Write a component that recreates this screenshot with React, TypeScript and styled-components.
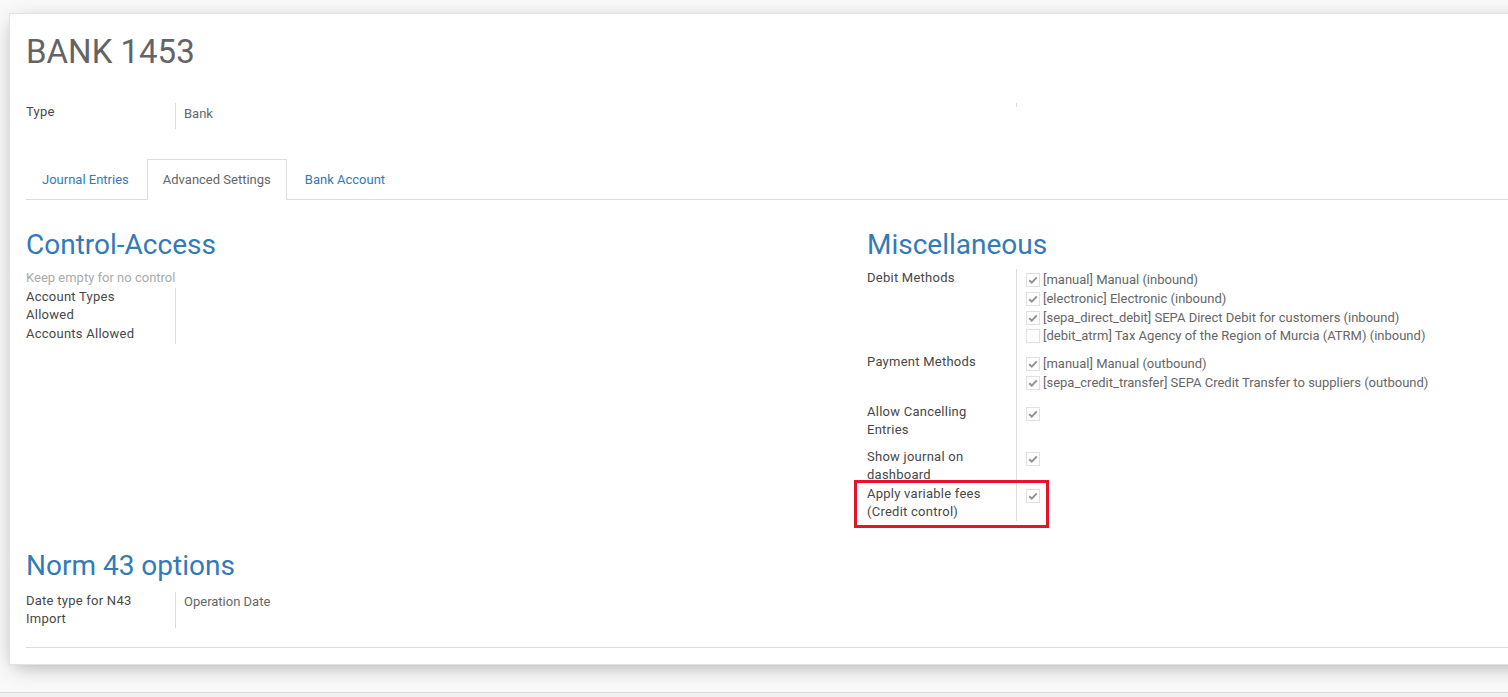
import styled, { createGlobalStyle } from 'styled-components';

const GlobalStyle = createGlobalStyle`
  html, body {
    margin: 0;
    padding: 0;
    overflow: hidden;
    background: #f9f9f9;
  }
  body {
    font-family: Roboto, "Liberation Sans", Arial, sans-serif;
    font-size: 13px;
    line-height: 18px;
    color: #4c4c4c;
  }
`;

interface MethodItem {
  code: string;
  label: string;
  checked: boolean;
}

const debitMethods: MethodItem[] = [
  { code: 'manual', label: 'Manual (inbound)', checked: true },
  { code: 'electronic', label: 'Electronic (inbound)', checked: true },
  { code: 'sepa_direct_debit', label: 'SEPA Direct Debit for customers (inbound)', checked: true },
  { code: 'debit_atrm', label: 'Tax Agency of the Region of Murcia (ATRM) (inbound)', checked: false },
];

const paymentMethods: MethodItem[] = [
  { code: 'manual', label: 'Manual (outbound)', checked: true },
  { code: 'sepa_credit_transfer', label: 'SEPA Credit Transfer to suppliers (outbound)', checked: true },
];

function CheckBox({ checked }: { checked: boolean }) {
  return (
    <Box>
      {checked && (
        <svg width="10" height="8" viewBox="0 0 10 8">
          <polyline points="1.2,4.2 3.8,6.6 8.8,1.4" fill="none" stroke="#939393" strokeWidth="2" />
        </svg>
      )}
    </Box>
  );
}

function MethodList({ items }: { items: MethodItem[] }) {
  return (
    <>
      {items.map((m) => (
        <Item key={m.code + m.label}>
          <CheckBox checked={m.checked} />
          <span>[{m.code}] {m.label}</span>
        </Item>
      ))}
    </>
  );
}

export default function App() {
  return (
    <>
      <GlobalStyle />
      <Page>
        <Sheet>
          <Title>BANK 1453</Title>

          <Groups $mt={31}>
            <div>
              <Row $h={26}>
                <Label>Type</Label>
                <Value>Bank</Value>
              </Row>
            </div>
            <div>
              <Row $h={4}>
                <Label />
                <Value $pt={0} />
              </Row>
            </div>
          </Groups>

          <Tabs>
            <Tab>Journal Entries</Tab>
            <Tab $active>Advanced Settings</Tab>
            <Tab>Bank Account</Tab>
          </Tabs>

          <Groups>
            <div>
              <Heading>Control-Access</Heading>
              <Help>Keep empty for no control</Help>
              <Row $h={37}>
                <Label>Account Types Allowed</Label>
                <Value />
              </Row>
              <Row $h={19}>
                <Label>Accounts Allowed</Label>
                <Value />
              </Row>
            </div>
            <div>
              <Heading>Miscellaneous</Heading>
              <RowList>
                <Row $h={84}>
                  <Label>Debit Methods</Label>
                  <Value>
                    <MethodList items={debitMethods} />
                  </Value>
                </Row>
                <Row $h={50}>
                  <Label>Payment Methods</Label>
                  <Value>
                    <MethodList items={paymentMethods} />
                  </Value>
                </Row>
                <Row $h={45}>
                  <Label>Allow Cancelling Entries</Label>
                  <Value>
                    <Item>
                      <CheckBox checked />
                    </Item>
                  </Value>
                </Row>
                <Row $h={37}>
                  <Label>Show journal on dashboard</Label>
                  <Value>
                    <Item>
                      <CheckBox checked />
                    </Item>
                  </Value>
                </Row>
                <Row $h={35}>
                  <Label>Apply variable fees (Credit control)</Label>
                  <Value>
                    <Item>
                      <CheckBox checked />
                    </Item>
                  </Value>
                  <Highlight />
                </Row>
              </RowList>
            </div>
          </Groups>

          <Heading $mt={30}>Norm 43 options</Heading>
          <Row $h={36} style={{ marginTop: 10 }}>
            <Label>Date type for N43 Import</Label>
            <Value $pt={1}>Operation Date</Value>
          </Row>

          <Rule />
        </Sheet>
        <Footer />
      </Page>
    </>
  );
}

const Page = styled.div`
  height: 697px;
  display: flex;
  flex-direction: column;
`;

const Sheet = styled.div`
  flex: none;
  width: 1716px;
  margin: 13px 0 0 9px;
  padding: 16px 16px;
  box-sizing: border-box;
  background: #fff;
  border: 1px solid #e2e2e2;
  box-shadow: 0 5px 20px -5px rgba(0, 0, 0, 0.35);
`;

const Title = styled.h1`
  margin: 2px 0 0;
  font-size: 33px;
  line-height: 40px;
  font-weight: 400;
  color: #646464;
`;

const Groups = styled.div<{ $mt?: number }>`
  display: grid;
  grid-template-columns: 841px 1fr;
  align-items: start;
  margin-top: ${(p) => p.$mt ?? 0}px;
`;

const RowList = styled.div`
  margin-top: 8px;
`;

const Row = styled.div<{ $h: number }>`
  position: relative;
  display: grid;
  grid-template-columns: 149px 1fr;
  height: ${(p) => p.$h}px;
`;

const Label = styled.div`
  padding-right: 15px;
  font-weight: 400;
  letter-spacing: 0.25px;
  color: #474747;
`;

const Value = styled.div<{ $pt?: number }>`
  border-left: 1px solid #dcdcdc;
  padding: ${(p) => p.$pt ?? 2}px 0 0 8px;
  color: #666;
`;

const Item = styled.div`
  display: flex;
  align-items: center;
  height: 18.7px;
  color: #666;
  white-space: nowrap;
`;

const Box = styled.span`
  flex: none;
  display: inline-flex;
  align-items: center;
  justify-content: center;
  width: 14px;
  height: 14px;
  box-sizing: border-box;
  margin: 0 3px 0 1px;
  border: 1px solid #e0e0e0;
  background: #fff;
`;

const Tabs = styled.div`
  display: flex;
  margin-top: 30px;
  border-bottom: 1px solid #dcdcdc;
`;

const Tab = styled.div<{ $active?: boolean }>`
  margin: 0 2px -1px 0;
  padding: 10px 15px;
  line-height: 19px;
  border: 1px solid ${(p) => (p.$active ? '#dcdcdc' : 'transparent')};
  border-bottom-color: ${(p) => (p.$active ? '#fff' : 'transparent')};
  background: ${(p) => (p.$active ? '#fff' : 'transparent')};
  color: ${(p) => (p.$active ? '#666' : '#337ab7')};
`;

const Heading = styled.h2<{ $mt?: number }>`
  margin: ${(p) => p.$mt ?? 29}px 0 0;
  font-size: 28px;
  line-height: 32px;
  font-weight: 400;
  color: #337ab7;
`;

const Help = styled.div`
  margin: 8px 0 1px;
  color: #aaa;
`;

const Highlight = styled.div`
  position: absolute;
  left: -13px;
  top: -5px;
  width: 195px;
  height: 48px;
  box-sizing: border-box;
  border: 3px solid #e8132b;
  pointer-events: none;
`;

const Rule = styled.div`
  margin-top: 19px;
  border-top: 1px solid #dcdcdc;
`;

const Footer = styled.div`
  margin-top: auto;
  height: 4px;
  border-top: 1px solid #dadada;
  background: #f1f1f1;
`;
